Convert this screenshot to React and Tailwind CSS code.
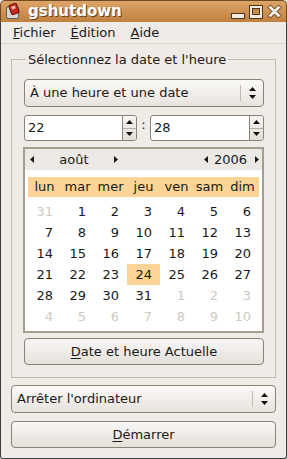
import React from "react";

const weeks = [
  [[31, true], [1], [2], [3], [4], [5], [6]],
  [[7], [8], [9], [10], [11], [12], [13]],
  [[14], [15], [16], [17], [18], [19], [20]],
  [[21], [22], [23], [24], [25], [26], [27]],
  [[28], [29], [30], [31], [1, true], [2, true], [3, true]],
  [[4, true], [5, true], [6, true], [7, true], [8, true], [9, true], [10, true]],
];

const dayNames = ["lun", "mar", "mer", "jeu", "ven", "sam", "dim"];

const Tri = ({ dir }) => {
  const pts = {
    left: "4,0 4,7 0,3.5",
    right: "0,0 0,7 4,3.5",
  };
  return (
    <svg width="4" height="7" viewBox="0 0 4 7" className="block shrink-0">
      <polygon points={pts[dir]} fill="#1a1a1a" />
    </svg>
  );
};

const UpDown = () => (
  <svg width="7" height="12" viewBox="0 0 7 12" className="block">
    <polygon points="3.5,0 7,4 0,4" fill="#111" />
    <polygon points="0,8 7,8 3.5,12" fill="#111" />
  </svg>
);

const Combo = ({ label, className = "" }) => (
  <div
    className={`flex items-center h-[28px] rounded-[4px] border border-[#8b8378] bg-gradient-to-b from-[#fbfaf9] to-[#e7e2dc] ${className}`}
  >
    <span className="flex-1 pl-[5px] truncate">{label}</span>
    <span className="h-[16px] w-px bg-[#c3bcb3]" />
    <span className="w-[22px] flex justify-center">
      <UpDown />
    </span>
  </div>
);

const Button = ({ mnemonic, rest, className = "" }) => (
  <button
    className={`w-full flex items-center justify-center h-[27px] rounded-[4px] border border-[#8b8378] bg-gradient-to-b from-[#f9f8f7] to-[#e4dfd9] ${className}`}
  >
    <span>
      <span className="underline underline-offset-2">{mnemonic}</span>
      {rest}
    </span>
  </button>
);

const Spin = ({ value, className = "" }) => (
  <div
    className={`flex h-[26px] rounded-[3px] border border-[#8b8378] bg-white overflow-hidden ${className}`}
  >
    <span className="flex-1 pl-[3px] flex items-center">{value}</span>
    <div className="w-[14px] flex flex-col border-l border-[#8b8378] bg-gradient-to-b from-[#f7f5f3] to-[#e2ddd7]">
      <span className="flex-1 flex items-center justify-center border-b border-[#b3aba1]">
        <svg width="7" height="4" viewBox="0 0 7 4">
          <polygon points="3.5,0 7,4 0,4" fill="#111" />
        </svg>
      </span>
      <span className="flex-1 flex items-center justify-center">
        <svg width="7" height="4" viewBox="0 0 7 4">
          <polygon points="0,0 7,0 3.5,4" fill="#111" />
        </svg>
      </span>
    </div>
  </div>
);

const App = () => {
  return (
    <div
      className="w-[287px] h-[459px] flex flex-col bg-[#efebe7] text-[13px] text-[#1a1a1a] overflow-hidden"
      style={{ fontFamily: '"DejaVu Sans", "Liberation Sans", sans-serif' }}
    >
      {/* title bar */}
      <div className="h-[22px] shrink-0 flex items-center rounded-t-[5px] bg-gradient-to-b from-[#dda366] to-[#c0813f] border border-b-0 border-[#6e4a25]">
        <svg width="17" height="17" viewBox="0 0 17 17" className="ml-[4px]">
          <rect x="1.5" y="3.5" width="12" height="12" rx="2" fill="#d9d6d2" stroke="#5b5b5b" />
          <rect x="5" y="1" width="8" height="10" rx="1.5" fill="#c42a1f" stroke="#6a1410" transform="rotate(-20 9 6)" />
          <rect x="7" y="3" width="4" height="3" fill="#f2b2a8" transform="rotate(-20 9 6)" />
        </svg>
        <span className="ml-[6px] font-bold text-[15px] text-white [text-shadow:1px_1px_0_#6b4320] leading-none">
          gshutdown
        </span>
        <div className="ml-auto flex items-center gap-[4px] mr-[4px]">
          <svg width="14" height="14" viewBox="0 0 14 14">
            <rect x="0.5" y="8.5" width="13" height="5" fill="#f3ebe1" stroke="#4e3418" />
          </svg>
          <svg width="14" height="14" viewBox="0 0 14 14">
            <rect x="0.5" y="0.5" width="13" height="13" fill="#f3ebe1" stroke="#4e3418" />
            <rect x="3.5" y="3.5" width="7" height="6" fill="#c98b4c" stroke="#4e3418" />
          </svg>
          <svg width="15" height="15" viewBox="0 0 15 15">
            <path
              d="M1 3.5 L3.5 1 L7.5 5 L11.5 1 L14 3.5 L10 7.5 L14 11.5 L11.5 14 L7.5 10 L3.5 14 L1 11.5 L5 7.5 Z"
              fill="#f6f0e8"
              stroke="#4e3418"
              strokeLinejoin="round"
            />
          </svg>
        </div>
      </div>

      <div className="flex-1 flex flex-col border-x border-b border-[#3f3f3f] rounded-b-[3px]">
        {/* menu bar */}
        <div className="h-[22px] shrink-0 flex items-center gap-[15px] pl-[12px] border-b border-[#dcd6cf]">
          <span>
            <span className="underline">F</span>ichier
          </span>
          <span>
            <span className="underline">É</span>dition
          </span>
          <span>
            <span className="underline">A</span>ide
          </span>
        </div>

        <div className="flex flex-col px-[10px]">
          <fieldset className="mt-[8px] border border-[#c2bbb3] pl-[12px] pr-[11px] pb-[12px] pt-[12px]">
            <legend className="ml-[2px] px-[2px] leading-[15px]">
              Sélectionnez la date et l'heure
            </legend>

            <Combo label="À une heure et une date" />

            <div className="flex items-center mt-[8px]">
              <Spin value="22" className="w-[113px]" />
              <span className="w-[13px] text-center -mt-[6px]">:</span>
              <Spin value="28" className="flex-1" />
            </div>

            {/* calendar */}
            <div className="mt-[6px] -ml-[1px] border-2 border-[#a69d91] bg-white">
              <div className="h-[21px] flex items-center bg-[#ece9e5] pl-[5px] pr-[3px]">
                <Tri dir="left" />
                <span className="w-[80px] text-center">août</span>
                <Tri dir="right" />
                <span className="flex-1" />
                <Tri dir="left" />
                <span className="ml-[6px] mr-[8px]">2006</span>
                <Tri dir="right" />
              </div>
              <div className="px-[3px] pt-[7px] pb-[4px]">
                <div className="grid grid-cols-[repeat(7,33px)] h-[20px] items-center bg-[#fcd596]">
                  {dayNames.map((d) => (
                    <span key={d} className="text-center">
                      {d}
                    </span>
                  ))}
                </div>
                <div className="mt-[4px]">
                  {weeks.map((w, i) => (
                    <div key={i} className="grid grid-cols-[repeat(7,33px)] h-[21px]">
                      {w.map(([n, other], j) => (
                        <span
                          key={j}
                          className={`flex items-center justify-end pr-[8px] ${
                            other ? "text-[#cfc9c2]" : ""
                          } ${i === 3 && j === 3 ? "bg-[#fcd596]" : ""}`}
                        >
                          {n}
                        </span>
                      ))}
                    </div>
                  ))}
                </div>
              </div>
            </div>

            <Button mnemonic="D" rest="ate et heure Actuelle" className="mt-[5px]" />
          </fieldset>

          <Combo label="Arrêter l'ordinateur" className="mt-[7px]" />
          <Button mnemonic="D" rest="émarrer" className="mt-[8px]" />
        </div>
      </div>
    </div>
  );
};

export default App;
